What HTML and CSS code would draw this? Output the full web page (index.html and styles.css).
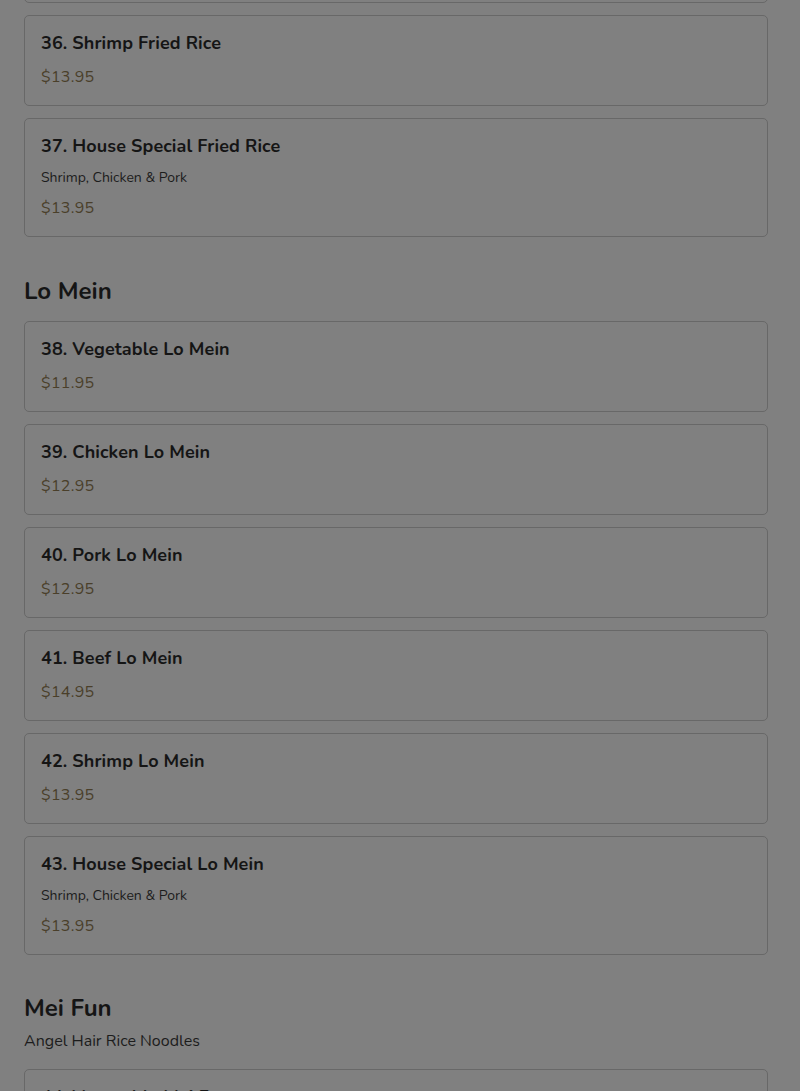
FILE: index.html
```html
<!DOCTYPE html>
<html>
<head>
<meta charset="utf-8">
<link rel="stylesheet" href="styles.css">
</head>
<body>
<div class="menu">
  <div class="card card-top"></div>
  <div class="card">
    <div class="title">36. Shrimp Fried Rice</div>
    <div class="price">$13.95</div>
  </div>
  <div class="card">
    <div class="title">37. House Special Fried Rice</div>
    <div class="desc">Shrimp, Chicken &amp; Pork</div>
    <div class="price">$13.95</div>
  </div>

  <h2 class="section">Lo Mein</h2>
  <div class="card">
    <div class="title">38. Vegetable Lo Mein</div>
    <div class="price">$11.95</div>
  </div>
  <div class="card">
    <div class="title">39. Chicken Lo Mein</div>
    <div class="price">$12.95</div>
  </div>
  <div class="card">
    <div class="title">40. Pork Lo Mein</div>
    <div class="price">$12.95</div>
  </div>
  <div class="card">
    <div class="title">41. Beef Lo Mein</div>
    <div class="price">$14.95</div>
  </div>
  <div class="card">
    <div class="title">42. Shrimp Lo Mein</div>
    <div class="price">$13.95</div>
  </div>
  <div class="card">
    <div class="title">43. House Special Lo Mein</div>
    <div class="desc">Shrimp, Chicken &amp; Pork</div>
    <div class="price">$13.95</div>
  </div>

  <h2 class="section with-sub">Mei Fun</h2>
  <div class="section-sub">Angel Hair Rice Noodles</div>
  <div class="card">
    <div class="title">44. Vegetable Mei Fun</div>
    <div class="price">$11.95</div>
  </div>
</div>
</body>
</html>
```

FILE: styles.css
```css
html, body {
  margin: 0;
  padding: 0;
  background: #808080;
  overflow: hidden;
}
body {
  font-family: "Nunito", Lato, "Open Sans", sans-serif;
  color: #151515;
}
.menu {
  padding: 0 32px 0 24px;
  display: flex;
  flex-direction: column;
  margin-top: -92px;
}
.card {
  border: 1px solid #686868;
  border-radius: 5px;
  padding: 15px 16px 18px;
  margin-bottom: 12px;
  display: flex;
  flex-direction: column;
}
.card-top {
  height: 60px;
}
.title {
  font-size: 18px;
  font-weight: 700;
  line-height: 24px;
  letter-spacing: 0.1px;
}
.desc {
  font-size: 14px;
  line-height: 18px;
  margin-top: 11px;
  color: #1c1c1c;
}
.price {
  font-size: 16px;
  line-height: 20px;
  margin-top: 12px;
  color: #4a3f2a;
  letter-spacing: 0.3px;
}
.desc + .price {
  margin-top: 11px;
}
.section {
  font-size: 24px;
  font-weight: 700;
  line-height: 32px;
  margin: 26px 0 14px;
}
.section.with-sub {
  margin: 25px 0 7px;
}
.section-sub {
  font-size: 16px;
  line-height: 20px;
  margin-bottom: 18px;
  color: #1c1c1c;
}
```
